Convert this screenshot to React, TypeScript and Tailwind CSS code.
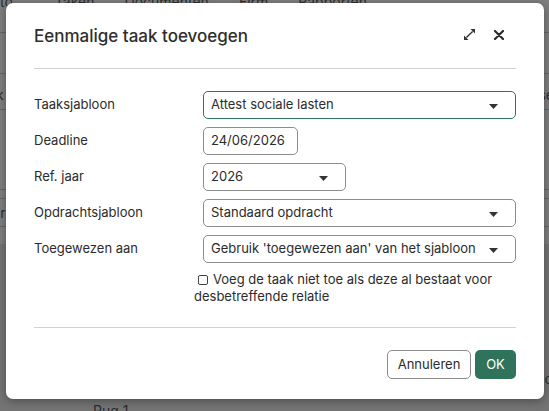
import type { ReactNode } from 'react';

// Dialoog "Eenmalige taak toevoegen" boven de (gedimde) takenlijst.

function Caret() {
  return (
    <svg width="9" height="5" viewBox="0 0 9 5" className="shrink-0">
      <path d="M0 0h9L4.5 5z" fill="#333" />
    </svg>
  );
}

function ExpandIcon() {
  return (
    <svg width="11" height="11" viewBox="0 0 11 11">
      <path d="M6.5 0H11v4.5z" fill="#333" />
      <path d="M0 6.5V11h4.5z" fill="#333" />
      <path d="M8.6 2.4 2.4 8.6" stroke="#333" strokeWidth="1.4" />
    </svg>
  );
}

function CloseIcon() {
  return (
    <svg width="10" height="10" viewBox="0 0 10 10">
      <path d="M1 1l8 8M9 1 1 9" stroke="#2b2b2b" strokeWidth="2.2" strokeLinecap="round" />
    </svg>
  );
}

function Row({ label, children }: { label: string; children: ReactNode }) {
  return (
    <div className="flex items-start">
      <div className="w-[169px] shrink-0 pt-[4px] leading-[18px]">{label}</div>
      {children}
    </div>
  );
}

function Select({ value, width, focused }: { value: string; width: string; focused?: boolean }) {
  return (
    <div
      className={`flex h-[28px] items-center justify-between rounded-[5px] border bg-white pl-[7px] pr-[17px] ${width} ${
        focused ? 'border-[#2f7559]' : 'border-[#8c8c8c]'
      }`}
    >
      <span className="truncate">{value}</span>
      <span className="pt-[3px]">
        <Caret />
      </span>
    </div>
  );
}

// gedimde pagina achter de dialoog
function Backdrop() {
  return (
    <div className="flex h-full flex-col text-[14px] text-[#2e2e2e] [&>*]:shrink-0">
      <div className="-mt-[9px] flex h-[20px] items-center gap-[30px]">
        <span>to</span>
        <span className="ml-[12px]">Taken</span>
        <span>Documenten</span>
        <span>Firm</span>
        <span>Rapporten</span>
      </div>
      <div className="mt-[21px] h-[1px] bg-[#666]" />
      <div className="mt-[40px] h-[1px] bg-[#666]" />
      <div className="flex h-[35px] items-center justify-between pt-[6px]">
        <span className="-ml-[4px]">k</span>
        <span className="-mr-[5px]">se</span>
      </div>
      <div className="h-[1px] bg-[#666]" />
      <div className="mt-[79px] h-[1px] bg-[#666]" />
      <div className="mt-[8px] h-[1px] bg-[#666]" />
      <div className="flex h-[27px] items-center">
        <span className="-ml-[8px]">er</span>
      </div>
      <div className="h-[1px] bg-[#666]" />
      <div className="mt-[17px] flex-1 bg-[#747474]">
        <div className="mt-[124px] flex h-[20px] items-center justify-end">
          <span className="-mr-[4px]">o</span>
        </div>
        <div className="mt-[12px] pl-[93px]">Pug 1</div>
      </div>
    </div>
  );
}

export default function App() {
  return (
    <div className="relative h-[411px] w-[549px] overflow-hidden bg-[#7e7e7e] font-['Inter','Noto_Sans',sans-serif] text-[13px] text-[#2b2b2b]">
      <Backdrop />

      <div className="absolute left-[6px] top-[3px] w-[538px] rounded-[7px] bg-white px-[28px] pb-[20px] shadow-[0_2px_10px_rgba(0,0,0,0.35)]">
        <div className="flex h-[66px] items-center justify-between border-b border-[#d2d2d2]">
          <h2 className="pt-[3px] text-[17px] font-medium text-[#2e2e2e]">Eenmalige taak toevoegen</h2>
          <div className="flex items-center gap-[19px] pr-[12px]">
            <button type="button" aria-label="Vergroten" className="-mt-[2px]">
              <ExpandIcon />
            </button>
            <button type="button" aria-label="Sluiten" className="-mt-[2px]">
              <CloseIcon />
            </button>
          </div>
        </div>

        <div className="flex flex-col gap-[8px] pt-[22px]">
          <Row label="Taaksjabloon">
            <Select value="Attest sociale lasten" width="flex-1" focused />
          </Row>
          <Row label="Deadline">
            <div className="flex h-[28px] w-[95px] items-center rounded-[5px] border border-[#8c8c8c] pl-[7px]">
              24/06/2026
            </div>
          </Row>
          <Row label="Ref. jaar">
            <Select value="2026" width="w-[143px]" />
          </Row>
          <Row label="Opdrachtsjabloon">
            <Select value="Standaard opdracht" width="flex-1" />
          </Row>
          <Row label="Toegewezen aan">
            <Select value="Gebruik 'toegewezen aan' van het sjabloon" width="flex-1" />
          </Row>
          <label className="ml-[160px] block leading-[17px]">
            <span className="ml-[4px] mr-[5px] inline-block h-[10px] w-[10px] translate-y-[1px] rounded-[2px] border border-[#444] bg-white align-baseline" />
            Voeg de taak niet toe als deze al bestaat voor desbetreffende relatie
          </label>
        </div>

        <div className="mt-[22px] h-[1px] bg-[#d2d2d2]" />

        <div className="mt-[22px] flex justify-end gap-[4px]">
          <button
            type="button"
            className="h-[29px] w-[84px] rounded-[5px] border border-[#8c8c8c] bg-white text-[13px] text-[#2b2b2b]"
          >
            Annuleren
          </button>
          <button type="button" className="h-[29px] w-[41px] rounded-[5px] bg-[#2f735a] text-[13px] text-white">
            OK
          </button>
        </div>
      </div>
    </div>
  );
}
